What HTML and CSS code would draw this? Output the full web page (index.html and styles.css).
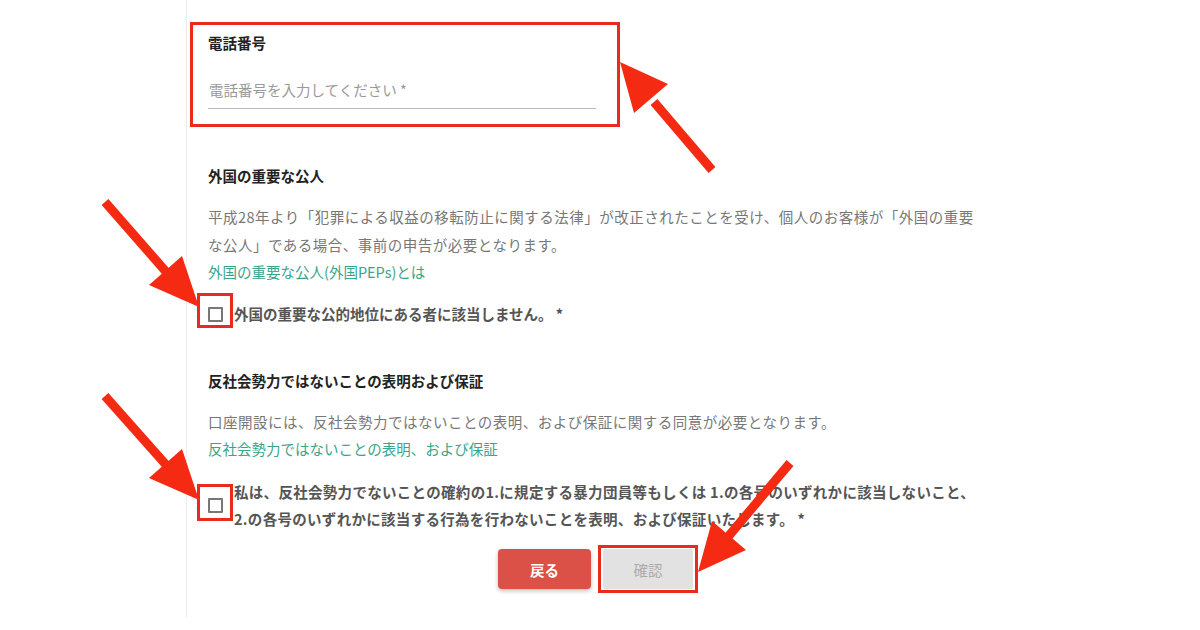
FILE: index.html
```html
<!DOCTYPE html>
<html lang="ja">
<head>
<meta charset="utf-8">
<link rel="stylesheet" href="styles.css">
</head>
<body>
<div class="page">
  <main class="form">
    <section class="phone">
      <h2 class="heading">電話番号</h2>
      <div class="input">電話番号を入力してください *</div>
    </section>

    <section class="pep">
      <h2 class="heading">外国の重要な公人</h2>
      <p class="desc">平成28年より「犯罪による収益の移転防止に関する法律」が改正されたことを受け、個人のお客様が「外国の重要な公人」である場合、事前の申告が必要となります。</p>
      <a class="link">外国の重要な公人(外国PEPs)とは</a>
      <label class="check">
        <span class="box"></span>
        <span class="label">外国の重要な公的地位にある者に該当しません。 *</span>
      </label>
    </section>

    <section class="anti">
      <h2 class="heading">反社会勢力ではないことの表明および保証</h2>
      <p class="desc">口座開設には、反社会勢力ではないことの表明、および保証に関する同意が必要となります。</p>
      <a class="link">反社会勢力ではないことの表明、および保証</a>
      <label class="check two">
        <span class="box"></span>
        <span class="label">私は、反社会勢力でないことの確約の1.に規定する暴力団員等もしくは 1.の各号のいずれかに該当しないこと、<br>2.の各号のいずれかに該当する行為を行わないことを表明、および保証いたします。 *</span>
      </label>
    </section>

    <div class="buttons">
      <button class="btn back">戻る</button>
      <button class="btn confirm">確認</button>
    </div>
  </main>

  <svg class="annot" width="1200" height="630" viewBox="0 0 1200 630">
    <g fill="none" stroke="#ea2a1c" stroke-width="3">
      <rect x="191.5" y="23.5" width="427" height="102"/>
      <rect x="198.5" y="294.5" width="33" height="32"/>
      <rect x="198.5" y="485.5" width="33" height="34"/>
      <rect x="599.5" y="546.5" width="97" height="45"/>
    </g>
    <g stroke="#f42a12" stroke-width="9" fill="#f42a12">
      <line x1="712" y1="170" x2="654" y2="102"/>
      <polygon stroke="none" points="620,62 668,84 634,113"/>
      <line x1="105" y1="202" x2="168" y2="274"/>
      <polygon stroke="none" points="199,307 182,256 149,285"/>
      <line x1="105" y1="396" x2="168" y2="467"/>
      <polygon stroke="none" points="199,500 182,449 149,478"/>
      <line x1="790" y1="463" x2="727" y2="538"/>
      <polygon stroke="none" points="698,572 746,550 712,521"/>
    </g>
  </svg>
</div>
</body>
</html>
```

FILE: styles.css
```css
* { box-sizing: border-box; }

html, body {
  margin: 0;
  padding: 0;
  background: #fff;
}

body {
  font-family: "Noto Sans CJK JP", "Noto Sans", sans-serif;
  color: #222;
  width: 1200px;
  height: 630px;
  overflow: hidden;
}

.page {
  position: relative;
  width: 1200px;
  height: 630px;
}

.form {
  margin-left: 186px;
  width: 800px;
  height: 617px;
  border-left: 1px solid #ececec;
  padding: 33px 0 0 21px;
  display: flex;
  flex-direction: column;
}

.heading {
  margin: 0;
  font-size: 14.5px;
  line-height: 20px;
  font-weight: 700;
  color: #222;
}

.phone .input {
  margin-top: 19px;
  width: 388px;
  padding: 8px 0 8px 1px;
  line-height: 20px;
  font-size: 14.5px;
  color: #9a9a9a;
  border-bottom: 1px solid #b9b9b9;
}

.pep { margin-top: 57px; }
.anti { margin-top: 45px; }

.desc {
  margin: 17px 0 0;
  font-size: 14.5px;
  line-height: 28px;
  letter-spacing: 0.5px;
  color: #777;
  width: 775px;
}

.link {
  display: block;
  font-size: 14.5px;
  line-height: 26px;
  color: #38a58b;
  text-decoration: none;
}

.check {
  display: flex;
  align-items: center;
  gap: 11px;
  margin-top: 17px;
}

.check.two { margin-top: 16px; }

.box {
  flex: none;
  width: 15px;
  height: 15px;
  border: 2px solid #777;
  border-radius: 1px;
}

.label {
  font-size: 14.5px;
  line-height: 24px;
  font-weight: 700;
  color: #555;
}

.two .label {
  line-height: 27px;
  letter-spacing: 0.3px;
}

.buttons {
  margin-top: 17px;
  display: flex;
  justify-content: center;
  gap: 12px;
  padding-right: 3px;
}

.btn {
  font-family: inherit;
  height: 40px;
  border: none;
  border-radius: 4px;
  font-size: 14.5px;
  font-weight: 700;
  padding: 0;
}

.back {
  width: 93px;
  background: #db5148;
  color: #fff;
  box-shadow: 0 2px 4px rgba(0, 0, 0, 0.25);
}

.confirm {
  width: 90px;
  background: #e2e2e2;
  color: #ababab;
  font-weight: 400;
  border-radius: 2px;
}

.annot {
  position: absolute;
  left: 0;
  top: 0;
  pointer-events: none;
}
```
